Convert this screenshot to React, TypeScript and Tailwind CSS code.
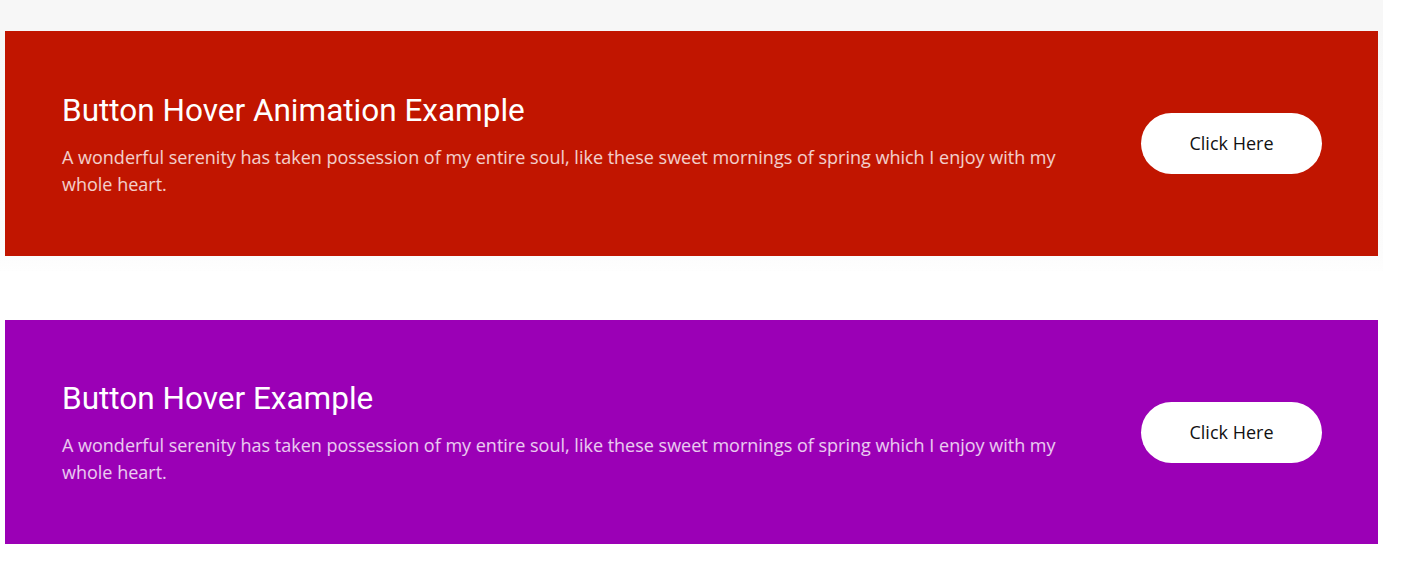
import React from 'react';

const banners = [
  { title: 'Button Hover Animation Example', bg: 'bg-[#c11500]', h: 'h-[225px]' },
  { title: 'Button Hover Example', bg: 'bg-[#9b00b6]', h: 'h-[224px]' },
];

const text =
  'A wonderful serenity has taken possession of my entire soul, like these sweet mornings of spring which I enjoy with my whole heart.';

function Banner({ title, bg, h }: { title: string; bg: string; h: string }) {
  return (
    <div className={`${bg} ${h} flex items-center justify-between pl-[57px] pr-[56px]`}>
      <div className="w-[1010px] pt-[2px]">
        <h2 className="font-['Roboto',sans-serif] text-[31.5px] leading-[38px] text-white">{title}</h2>
        <p className="mt-[14px] font-['Open_Sans',sans-serif] text-[18px] leading-[27px] text-white/80">
          {text}
        </p>
      </div>
      <button className="h-[61px] w-[181px] rounded-full bg-white font-['Open_Sans',sans-serif] text-[18px] text-[#111]">
        Click Here
      </button>
    </div>
  );
}

export default function App() {
  return (
    <div className="min-h-[566px] w-[1407px] bg-white">
      <div className="w-[1383px] bg-[linear-gradient(#f7f7f7,#f7f7f7_31px,#fcfcfc_256px,#fefefe)] px-[5px] pt-[31px] pb-[15px]">
        <Banner {...banners[0]} />
      </div>
      <div className="w-[1383px] px-[5px] pt-[49px]">
        <Banner {...banners[1]} />
      </div>
    </div>
  );
}
